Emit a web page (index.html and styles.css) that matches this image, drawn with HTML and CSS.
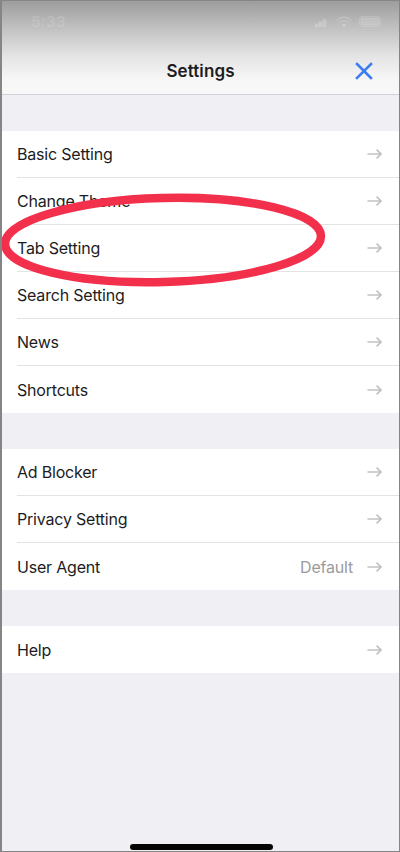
FILE: index.html
```html
<!DOCTYPE html>
<html>
<head>
<meta charset="utf-8">
<link rel="stylesheet" href="styles.css">
</head>
<body>
<div class="phone">
  <header class="top">
    <div class="status">
      <span class="time">5:33</span>
      <span class="sicons">
        <svg width="14" height="10" viewBox="0 0 14 10"><rect x="0" y="7" width="3" height="3" rx="0.5"/><rect x="4" y="5" width="3" height="5" rx="0.5"/><rect x="8" y="2.5" width="3" height="7.5" rx="0.5"/></svg>
        <svg width="16" height="11" viewBox="0 0 16 11"><path d="M1 4 A10 10 0 0 1 15 4" fill="none" stroke-width="1.6"/><path d="M3.5 6.5 A6.5 6.5 0 0 1 12.5 6.5" fill="none" stroke-width="1.6"/><path d="M6 9 A3 3 0 0 1 10 9 L8 11 Z"/></svg>
        <svg width="24" height="11" viewBox="0 0 24 11"><rect x="0.5" y="0.5" width="21" height="10" rx="2.5" fill="none" stroke-width="1"/><rect x="2" y="2" width="18" height="7" rx="1.5"/></svg>
      </span>
    </div>
    <div class="nav">
      <h1 class="title">Settings</h1>
      <svg class="close" width="18" height="18" viewBox="0 0 18 18"><path d="M2 2 L16 16 M16 2 L2 16"/></svg>
    </div>
  </header>

  <div class="content">
    <ul class="group">
      <li class="row"><span class="label">Basic Setting</span><span class="arrow"></span></li>
      <li class="row"><span class="label">Change Theme</span><span class="arrow"></span></li>
      <li class="row"><span class="label">Tab Setting</span><span class="arrow"></span></li>
      <li class="row"><span class="label">Search Setting</span><span class="arrow"></span></li>
      <li class="row"><span class="label">News</span><span class="arrow"></span></li>
      <li class="row"><span class="label">Shortcuts</span><span class="arrow"></span></li>
    </ul>
    <ul class="group">
      <li class="row"><span class="label">Ad Blocker</span><span class="arrow"></span></li>
      <li class="row"><span class="label">Privacy Setting</span><span class="arrow"></span></li>
      <li class="row"><span class="label">User Agent</span><span class="value">Default</span><span class="arrow"></span></li>
    </ul>
    <ul class="group">
      <li class="row"><span class="label">Help</span><span class="arrow"></span></li>
    </ul>
  </div>

  <svg class="circle" width="400" height="120" viewBox="0 0 400 120">
    <ellipse cx="163" cy="60" rx="158" ry="42" transform="rotate(-1.5 163 60)"/>
  </svg>
  <div class="home"></div>
</div>
</body>
</html>
```
FILE: styles.css
```css
* { box-sizing: border-box; }
html, body { margin: 0; padding: 0; }
body { width: 400px; height: 852px; background: #fff; font-family: Inter, "Noto Sans", "Liberation Sans", sans-serif; }

.phone {
  position: relative;
  width: 400px;
  height: 852px;
  border: 1px solid #858585;
  border-left-width: 2px;
  background: #efeff4;
  overflow: hidden;
  display: flex;
  flex-direction: column;
}

.top {
  height: 94px;
  flex: none;
  background: linear-gradient(to bottom, #9d9d9d 0px, #c2c2c2 28px, #e4e4e4 55px, #f6f6f6 78px, #f8f8f8 93px);
  border-bottom: 1px solid #d2d2d6;
  display: flex;
  flex-direction: column;
}

.status {
  height: 43px;
  display: flex;
  align-items: center;
  justify-content: space-between;
  padding: 0 16px 0 29px;
}
.time {
  font-size: 15px;
  font-weight: 600;
  color: rgba(255, 255, 255, 0.14);
  letter-spacing: 0.4px;
  padding-bottom: 2px;
}
.sicons { display: flex; gap: 7px; align-items: center; padding-bottom: 2px; }
.sicons svg { fill: rgba(255, 255, 255, 0.16); stroke: rgba(255, 255, 255, 0.16); }

.nav {
  flex: 1;
  position: relative;
  display: flex;
  align-items: center;
  justify-content: center;
  padding-top: 4px;
}
.title {
  margin: 0;
  font-size: 17px;
  font-weight: 600;
  color: #1c1c1e;
  letter-spacing: 0.1px;
}
.close {
  position: absolute;
  right: 26px;
  top: 18px;
  fill: none;
  stroke: #3a7ef2;
  stroke-width: 2.6;
  stroke-linecap: square;
}

.content {
  padding-top: 36px;
  display: flex;
  flex-direction: column;
  gap: 36px;
}

.group {
  list-style: none;
  margin: 0;
  padding: 0 0 0 15px;
  background: #fff;
}
.row {
  height: 47px;
  display: flex;
  align-items: center;
  border-bottom: 1px solid #e3e3e6;
  padding-right: 17px;
}
.row:last-child { border-bottom: none; }
.label {
  flex: 1;
  font-size: 16px;
  color: #1c1c1e;
  letter-spacing: -0.2px;
}
.value {
  font-size: 16px;
  color: #9a9a9e;
  letter-spacing: -0.2px;
  margin-right: 14px;
}
.arrow {
  width: 15px;
  height: 10px;
  background: no-repeat center / 15px 10px url("data:image/svg+xml;utf8,<svg xmlns='http://www.w3.org/2000/svg' viewBox='0 0 15 10'><path d='M0.5 5 H14 M9.6 0.7 L14 5 L9.6 9.3' fill='none' stroke='%23c2c2c6' stroke-width='1.7'/></svg>");
}

.circle {
  position: absolute;
  left: -2px;
  top: 179px;
  fill: none;
  stroke: #f3304c;
  stroke-width: 8.5;
}

.home {
  position: absolute;
  left: 128px;
  bottom: 1px;
  width: 143px;
  height: 6px;
  border-radius: 3px;
  background: #050505;
}
```
